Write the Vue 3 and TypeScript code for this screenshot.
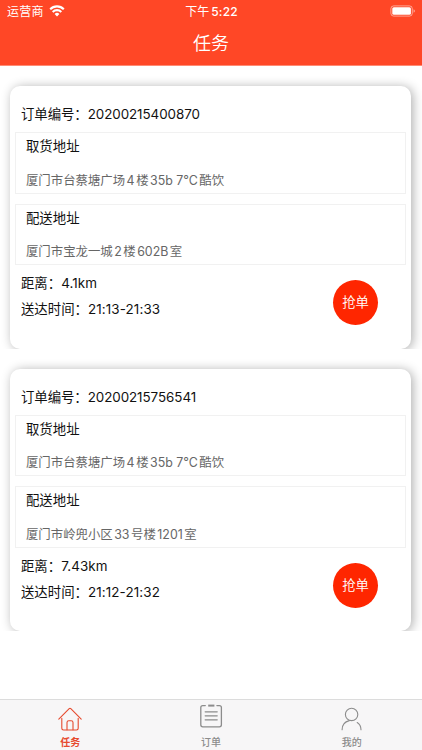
<script setup lang="ts">
interface Order {
  id: string
  pickup: string
  delivery: string
  distance: string
  time: string
}

const orders: Order[] = [
  {
    id: '20200215400870',
    pickup: '厦门市台蔡塘广场4楼35b 7°C酷饮',
    delivery: '厦门市宝龙一城2楼602B室',
    distance: '4.1km',
    time: '21:13-21:33',
  },
  {
    id: '20200215756541',
    pickup: '厦门市台蔡塘广场4楼35b 7°C酷饮',
    delivery: '厦门市岭兜小区33号楼1201室',
    distance: '7.43km',
    time: '21:12-21:32',
  },
]

// Splits an address into Chinese and Latin runs so that Latin runs get side spacing.
const runs = (text: string): string[] => text.match(/[\u4e00-\u9fff]+|[^\u4e00-\u9fff]+/g) ?? []
const isLatin = (run: string): boolean => !/[\u4e00-\u9fff]/.test(run)
</script>

<template>
  <div class="screen">
    <header class="header">
      <div class="status">
        <div class="carrier">
          <span>运营商</span>
          <svg class="wifi" width="16" height="12" viewBox="0 0 16 12" fill="none" stroke="#fff" stroke-width="2.1">
            <path d="M1.2 4.2a9.6 9.6 0 0 1 13.6 0" />
            <path d="M3.7 6.9a6.1 6.1 0 0 1 8.6 0" />
            <path d="M8 11.4 5.6 8.9a3.5 3.5 0 0 1 4.8 0Z" fill="#fff" stroke="none" />
          </svg>
        </div>
        <div class="clock">下午<span class="digits">5:22</span></div>
        <div class="power">
          <svg width="26" height="12" viewBox="0 0 26 12">
            <rect x="0.9" y="0.9" width="21.4" height="10.2" rx="2.8" fill="none" stroke="#fff" stroke-opacity=".5" />
            <rect x="2.3" y="2.3" width="18.6" height="7.4" rx="1.5" fill="#fff" />
            <path d="M23.6 4.3v3.4q1.2-.5 1.2-1.7t-1.2-1.7Z" fill="#fff" fill-opacity=".6" />
          </svg>
        </div>
      </div>
      <h1 class="title">任务</h1>
    </header>

    <main class="list">
      <div v-for="order in orders" :key="order.id" class="slot">
        <article class="card">
          <div class="line number">订单编号：{{ order.id }}</div>
          <section class="address">
            <div class="label">取货地址</div>
            <div class="detail">
              <span v-for="(run, i) in runs(order.pickup)" :key="i" :class="{ latin: isLatin(run) }">{{ run }}</span>
            </div>
          </section>
          <section class="address">
            <div class="label">配送地址</div>
            <div class="detail">
              <span v-for="(run, i) in runs(order.delivery)" :key="i" :class="{ latin: isLatin(run) }">{{ run }}</span>
            </div>
          </section>
          <div class="bottom">
            <div>
              <div class="line">距离：<span class="value">{{ order.distance }}</span></div>
              <div class="line">送达时间：<span class="value">{{ order.time }}</span></div>
            </div>
            <button class="grab">抢单</button>
          </div>
        </article>
      </div>
    </main>

    <nav class="tabs">
      <div class="tab active">
        <svg width="26" height="26" viewBox="0 0 26 26" fill="none" stroke="currentColor" stroke-width="1.1" stroke-linecap="round" stroke-linejoin="round">
          <path d="M1.8 13.2 12.2 2.7q.8-.7 1.6 0L24.2 13.2" />
          <path d="M4.8 12.4v9.9q0 1.7 1.7 1.7h13q1.7 0 1.7-1.7v-9.9" />
          <path d="M10 23.8v-7.2q0-1.8 1.8-1.8h2.4q1.8 0 1.8 1.8v7.2" />
        </svg>
        <span>任务</span>
      </div>
      <div class="tab">
        <svg class="raised" width="26" height="26" viewBox="0 0 26 26" fill="none" stroke="currentColor" stroke-width="1.3" stroke-linecap="round">
          <path d="M7.3 2.6H4.8q-2 0-2 2v17.2q0 2 2 2h16.6q2 0 2-2V4.6q0-2-2-2h-2.5" />
          <path d="M10.2 2.6H16.4" stroke-width="2" stroke-linecap="butt" />
          <path d="M7.2 8.8h12M7.2 12.8h12M7.2 16.8h12" />
        </svg>
        <span>订单</span>
      </div>
      <div class="tab">
        <svg width="26" height="26" viewBox="0 0 26 26" fill="none" stroke="currentColor" stroke-width="1.1" stroke-linecap="round">
          <circle cx="12.6" cy="8.4" r="6.2" />
          <path d="M3.1 23.8c0-4.7 3-8.2 7.2-9.2M18.2 16.5c2.5 1.6 3.8 4.2 3.8 7.3" />
        </svg>
        <span>我的</span>
      </div>
    </nav>
  </div>
</template>

<style>
body {
  margin: 0;
  background: #fff;
}
</style>

<style scoped>
.screen {
  display: flex;
  flex-direction: column;
  width: 422px;
  height: 750px;
  overflow: hidden;
  background: #fff;
  color: #111;
  font-family: Inter, 'Noto Sans CJK SC', sans-serif;
}
.header {
  box-sizing: border-box;
  flex: none;
  height: 66px;
  border-bottom: 1px solid #ff8b74;
  background: #ff4726;
  color: #fff;
}
.status {
  display: grid;
  grid-template-columns: 1fr auto 1fr;
  align-items: center;
  height: 23px;
  padding: 0 6px 0 7px;
  font-size: 12px;
  line-height: 23px;
}
.carrier {
  display: flex;
  align-items: center;
  gap: 5px;
  letter-spacing: 0.3px;
}
.wifi {
  display: block;
  margin-top: -2px;
}
.digits {
  margin-left: 2px;
  font-weight: 500;
  letter-spacing: 0.2px;
}
.power {
  display: flex;
  justify-content: flex-end;
}
.power svg {
  display: block;
  margin-top: -2px;
}
.title {
  margin: 0;
  font-size: 18px;
  font-weight: 350;
  line-height: 42px;
  text-align: center;
}
.list {
  flex: 1;
}
.slot {
  height: 262.5px;
  padding: 20px 10.6px 0 10.4px;
  overflow: hidden;
}
.card {
  box-sizing: border-box;
  height: 262.5px;
  padding: 17px 5px 0;
  border-radius: 10px;
  background: #fff;
  box-shadow: 2px 1px 11px rgba(0, 0, 0, 0.32);
}
.line {
  padding-left: 5.6px;
  font-size: 13.4px;
  line-height: 26px;
}
.number {
  margin-bottom: 7px;
  letter-spacing: -0.06px;
  line-height: 22px;
}
.value {
  letter-spacing: 0.12px;
}
.address {
  box-sizing: border-box;
  height: 61.5px;
  margin-bottom: 10px;
  padding: 3px 0 0 9.6px;
  border: 1.5px solid #f1f1f1;
}
.label {
  font-size: 13.4px;
  line-height: 20px;
}
.detail {
  display: flex;
  margin-top: 14.5px;
  color: #666;
  font-size: 12.4px;
  line-height: 19px;
  white-space: pre;
}
.latin {
  margin: 0 1.5px;
}
.bottom {
  display: flex;
  justify-content: space-between;
  margin-top: -5px;
}
.grab {
  width: 45px;
  height: 45px;
  margin: 10px 28.4px 0 0;
  padding: 0;
  border: 0;
  border-radius: 50%;
  background: #ff2600;
  color: #fff;
  font: inherit;
  font-size: 13.4px;
  font-weight: 350;
  line-height: 45px;
}
.tabs {
  box-sizing: border-box;
  display: flex;
  flex: none;
  height: 51px;
  border-top: 1px solid #dcdcdc;
  background: #f7f6f7;
}
.tab {
  display: flex;
  flex: 1;
  flex-direction: column;
  align-items: center;
  padding-top: 6px;
  color: #8c8c8c;
  font-size: 10px;
  font-weight: 500;
  line-height: 14px;
}
.tab span {
  margin-top: 3px;
}
.tab .raised {
  position: relative;
  top: -3.5px;
}
.active {
  color: #e64a2e;
}
.active span {
  font-weight: 700;
}
</style>
